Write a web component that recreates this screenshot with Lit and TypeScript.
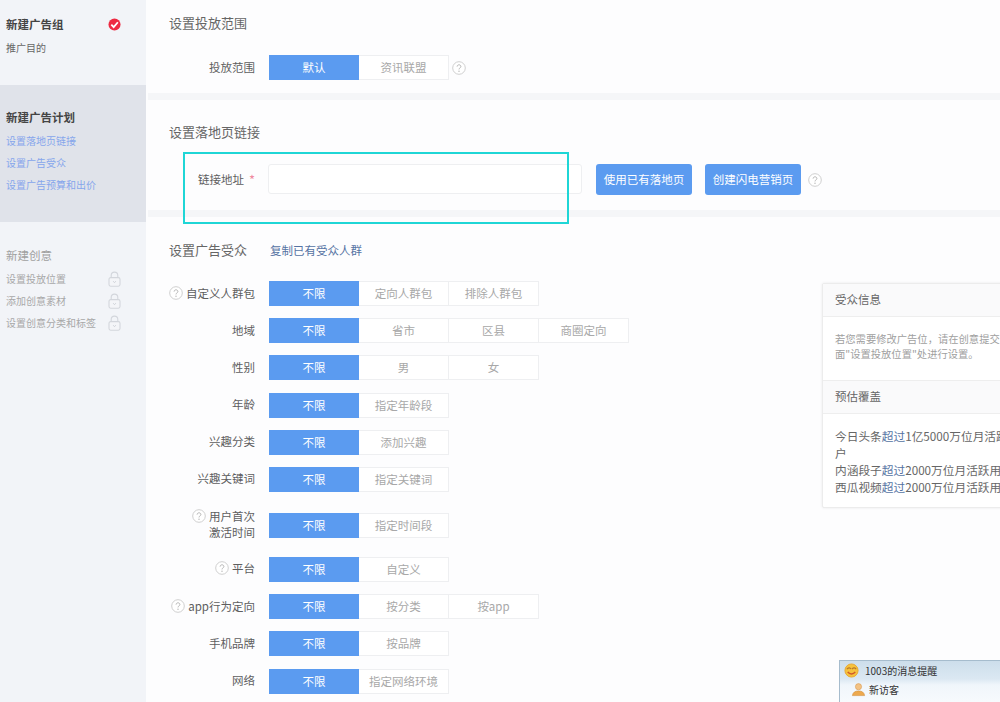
import { LitElement, html, css } from "lit";
import { customElement } from "lit/decorators.js";

const helpIcon = html`<svg class="help" viewBox="0 0 14 14" width="14" height="14"><circle cx="7" cy="7" r="6.3" fill="#fff" stroke="#cfcfcf" stroke-width="1"/><path d="M5.1 5.6c0-1.1.9-1.8 1.9-1.8s1.9.7 1.9 1.7c0 1.4-1.9 1.4-1.9 2.9" fill="none" stroke="#b5b5b5" stroke-width="1"/><circle cx="7" cy="10.2" r=".7" fill="#b5b5b5"/></svg>`;

const lockIcon = html`<svg class="lock" viewBox="0 0 13 16" width="13" height="16"><path d="M3.2 7V4.4a3.3 3.3 0 0 1 6.6 0V7" fill="none" stroke="#d3d6dc" stroke-width="1.1"/><rect x="1" y="6.6" width="11" height="8.6" rx="1.6" fill="#f4f5f8" stroke="#d3d6dc" stroke-width="1.1"/><path d="M5.2 10.2l1.3 1.5 1.3-1.5" fill="none" stroke="#cfd2d8" stroke-width="1"/></svg>`;

const checkIcon = html`<svg viewBox="0 0 14 14" width="13" height="13"><circle cx="7" cy="7" r="6.5" fill="#ee2a42"/><path d="M3.6 7.2l2.5 2.6 4.5-5.2" fill="none" stroke="#fff" stroke-width="1.9"/></svg>`;

const smile = html`<svg viewBox="0 0 16 16" width="15" height="15"><circle cx="8" cy="8" r="7" fill="#f6c23c" stroke="#e8a832"/><path d="M3 6.5c2-1.8 3.5-1.8 4.5 0M8.5 6.5c1.5-1.8 3-1.8 4.5 0" fill="none" stroke="#b9782a" stroke-width="1.2"/><path d="M4 9.5c2 3 6 3 8 0" fill="none" stroke="#d0592a" stroke-width="1.6"/></svg>`;

const person = html`<svg viewBox="0 0 16 16" width="15" height="15"><circle cx="8" cy="5" r="3.3" fill="#f3c283" stroke="#d69a52" stroke-width=".6"/><path d="M1.5 14.5c.4-3.5 3-5 6.500-5s6.100 1.500 6.500 5z" fill="#eda94e" stroke="#d18c38" stroke-width=".6"/></svg>`;

interface Row { label: string; help?: boolean; opts: string[]; two?: boolean; }
const rows: Row[] = [
  { label: "自定义人群包", help: true, opts: ["定向人群包", "排除人群包"] },
  { label: "地域", opts: ["省市", "区县", "商圈定向"] },
  { label: "性别", opts: ["男", "女"] },
  { label: "年龄", opts: ["指定年龄段"] },
  { label: "兴趣分类", opts: ["添加兴趣"] },
  { label: "兴趣关键词", opts: ["指定关键词"] },
  { label: "用户首次|激活时间", help: true, opts: ["指定时间段"], two: true },
  { label: "平台", help: true, opts: ["自定义"] },
  { label: "app行为定向", help: true, opts: ["按分类", "按app"] },
  { label: "手机品牌", opts: ["按品牌"] },
  { label: "网络", opts: ["指定网络环境"] },
];

@customElement("app-root")
export class AppRoot extends LitElement {
  static styles = css`
    :host {
      display: block;
      width: 1000px;
      height: 702px;
      overflow: hidden;
      position: relative;
      background: #fdfdfe;
      font-family: "Noto Sans CJK SC", "Liberation Sans", sans-serif;
      font-size: 11.5px;
      color: #666;
    }
    .page { display: flex; height: 702px; }
    .side {
      width: 146px;
      flex: none;
      background: #f2f4f8;
      display: flex;
      flex-direction: column;
      box-sizing: border-box;
    }
    .block { padding-left: 6px; padding-right: 25px; display: flex; flex-direction: column; }
    .b1 { height: 85px; padding-top: 16px; box-sizing: border-box; }
    .b2 { height: 137px; padding-top: 24px; box-sizing: border-box; background: #e0e3ea; }
    .b3 { padding-top: 25px; }
    .st { font-size: 11.5px; font-weight: 700; height: 16px; line-height: 16px; color: #444; display: flex; justify-content: space-between; align-items: center; }
    .b3 .st { color: #a0a0a0; font-weight: 400; }
    .si { font-size: 10px; height: 22px; line-height: 22px; color: #777; display: flex; justify-content: space-between; align-items: center; white-space: nowrap; }
    .b1 .si { margin-top: 5px; color: #666; }
    .b2 .st { margin-bottom: 5px; }
    .b2 .si { color: #86a6ec; }
    .b3 .st { margin-bottom: 5px; }
    .b3 .si { color: #a8a8a8; }
    .main { flex: 1; margin-left: 2px; min-width: 0; }
    .sec { padding-left: 21px; box-sizing: border-box; }
    .sec1 { height: 93px; padding-top: 16px; }
    .sec2 { height: 110px; padding-top: 25px; }
    .sec3 { padding-top: 26px; }
    .divider { height: 7px; background: #f5f6f8; }
    h2 { margin: 0; font-size: 13px; font-weight: 400; line-height: 14px; height: 16px; padding-bottom: 2px; box-sizing: border-box; color: #666; display: flex; align-items: center; }
    h2 a { font-size: 11.5px; color: #5573a3; margin-left: 23px; }
    .sec1 h2 { margin-bottom: 23px; }
    .sec2 h2 { margin-bottom: 23px; }
    .sec3 h2 { margin-bottom: 22px; }
    .row { display: flex; margin-left: -21px; align-items: center; height: 25px; margin-bottom: 12.2px; }
    .row.two { margin-top: 21px; margin-bottom: 19px; }
    .label {
      width: 107px;
      margin-right: 14px;
      flex: none;
      display: flex;
      justify-content: flex-end;
      align-items: center;
      gap: 3px;
      color: #5e5e5e;
      text-align: right;
      line-height: 16px;
      white-space: nowrap;
      padding-bottom: 2px;
      box-sizing: border-box;
    }
    .two .label { align-items: flex-start; }
    .two .label .help { margin-top: 1px; }
    .seg { display: flex; height: 25px; }
    .opt {
      width: 90px;
      box-sizing: border-box;
      border: 1px solid #eeeff1;
      border-left: none;
      background: #fff;
      color: #a8a8a8;
      display: flex;
      align-items: center;
      justify-content: center;
      padding-bottom: 1px;
    }
    .opt.on { background: #5b9bf0; border: none; color: #fff; }
    .help { flex: none; }
    .r-help { margin-left: 3px; display: flex; }
    .link-row { display: flex; margin-left: -21px; align-items: flex-start; }
    .link-label { width: 107px; margin-right: 13px; height: 30px; display: flex; justify-content: flex-end; align-items: center; gap: 5px; color: #5e5e5e; }
    .link-label i { color: #f08aa0; font-style: normal; font-size: 13px; }
    .input { width: 314px; height: 30px; box-sizing: border-box; border: 1px solid #eeeff1; border-radius: 3px; background: #fff; margin-right: 14px; }
    .btn { height: 31px; width: 96px; border-radius: 3px; background: #5b9bf0; color: #fff; display: flex; align-items: center; justify-content: center; margin-right: 13px; font-size: 11.5px; padding-bottom: 1px; box-sizing: border-box; }
    .btn.last { margin-right: 7px; }
    .link-row .help { margin-top: 9px; }
    .box {
      position: absolute;
      left: 183px;
      top: 152px;
      width: 386px;
      height: 72px;
      box-sizing: border-box;
      border: 2px solid #1fd6d6;
      pointer-events: none;
    }
    .card {
      position: absolute;
      left: 822px;
      top: 283px;
      width: 210px;
      height: 225px;
      box-sizing: border-box;
      background: #fff;
      border: 1px solid #ececec;
      box-shadow: 0 0 3px rgba(0,0,0,.08);
      border-radius: 2px;
    }
    .ch { height: 33px; padding: 0 0 2px 12px; box-sizing: border-box; display: flex; align-items: center; background: #fafafb; border-bottom: 1px solid #eeeeee; color: #666; }
    .cb1 { height: 63px; box-sizing: border-box; padding: 14px 12px 0; font-size: 10.3px; line-height: 15px; color: #a0a0a0; width: 202px; }
    .ch.second { height: 34px; border-top: 1px solid #eeeeee; }
    .cb2 { padding: 13px 0 0 12px; width: 200px; box-sizing: border-box; font-size: 11.7px; line-height: 17px; color: #666; }
    .cb2 span { color: #5573a3; }
    .chat {
      position: absolute;
      left: 839px;
      top: 660px;
      width: 170px;
      height: 50px;
      box-sizing: border-box;
      border: 1px solid #a6bccd;
      background: linear-gradient(#cddeeb 0, #dbe8f2 18px, #f0f6fb 24px, #fafcfe 100%);
      font-size: 10px;
      color: #333;
    }
    .chat .t { height: 19px; display: flex; align-items: center; gap: 6px; padding: 0 0 1px 4px; box-sizing: border-box; }
    .chat .n { height: 19px; display: flex; align-items: center; gap: 3px; padding: 0 0 1px 11px; box-sizing: border-box; }
    .chat svg { flex: none; }
  `;

  seg(opts: string[]) {
    return html`<div class="seg">
      <div class="opt on">不限</div>
      ${opts.map((o) => html`<div class="opt">${o}</div>`)}
    </div>`;
  }

  render() {
    return html`
      <div class="page">
        <aside class="side">
          <div class="block b1">
            <div class="st">新建广告组 ${checkIcon}</div>
            <div class="si">推广目的</div>
          </div>
          <div class="block b2">
            <div class="st">新建广告计划</div>
            <div class="si">设置落地页链接</div>
            <div class="si">设置广告受众</div>
            <div class="si">设置广告预算和出价</div>
          </div>
          <div class="block b3">
            <div class="st">新建创意</div>
            <div class="si">设置投放位置 ${lockIcon}</div>
            <div class="si">添加创意素材 ${lockIcon}</div>
            <div class="si">设置创意分类和标签 ${lockIcon}</div>
          </div>
        </aside>
        <main class="main">
          <section class="sec sec1">
            <h2>设置投放范围</h2>
            <div class="row">
              <div class="label">投放范围</div>
              <div class="seg">
                <div class="opt on">默认</div>
                <div class="opt">资讯联盟</div>
              </div>
              <span class="r-help">${helpIcon}</span>
            </div>
          </section>
          <div class="divider"></div>
          <section class="sec sec2">
            <h2>设置落地页链接</h2>
            <div class="link-row">
              <div class="link-label">链接地址 <i>*</i></div>
              <div class="input"></div>
              <div class="btn">使用已有落地页</div>
              <div class="btn last">创建闪电营销页</div>
              ${helpIcon}
            </div>
          </section>
          <div class="divider"></div>
          <section class="sec sec3">
            <h2>设置广告受众 <a>复制已有受众人群</a></h2>
            ${rows.map((r) => html`
              <div class="row ${r.two ? "two" : ""}">
                <div class="label">
                  ${r.help ? helpIcon : ""}
                  <div>${r.label.split("|").map((l) => html`<div>${l}</div>`)}</div>
                </div>
                ${this.seg(r.opts)}
              </div>`)}
          </section>
        </main>
      </div>
      <div class="box"></div>
      <div class="card">
        <div class="ch">受众信息</div>
        <div class="cb1">若您需要修改广告位，请在创意提交页面"设置投放位置"处进行设置。</div>
        <div class="ch second">预估覆盖</div>
        <div class="cb2">
          今日头条<span>超过</span>1亿5000万位月活跃用户<br />
          内涵段子<span>超过</span>2000万位月活跃用户<br />
          西瓜视频<span>超过</span>2000万位月活跃用户
        </div>
      </div>
      <div class="chat">
        <div class="t">${smile} 1003的消息提醒</div>
        <div class="n">${person} 新访客</div>
      </div>
    `;
  }
}
